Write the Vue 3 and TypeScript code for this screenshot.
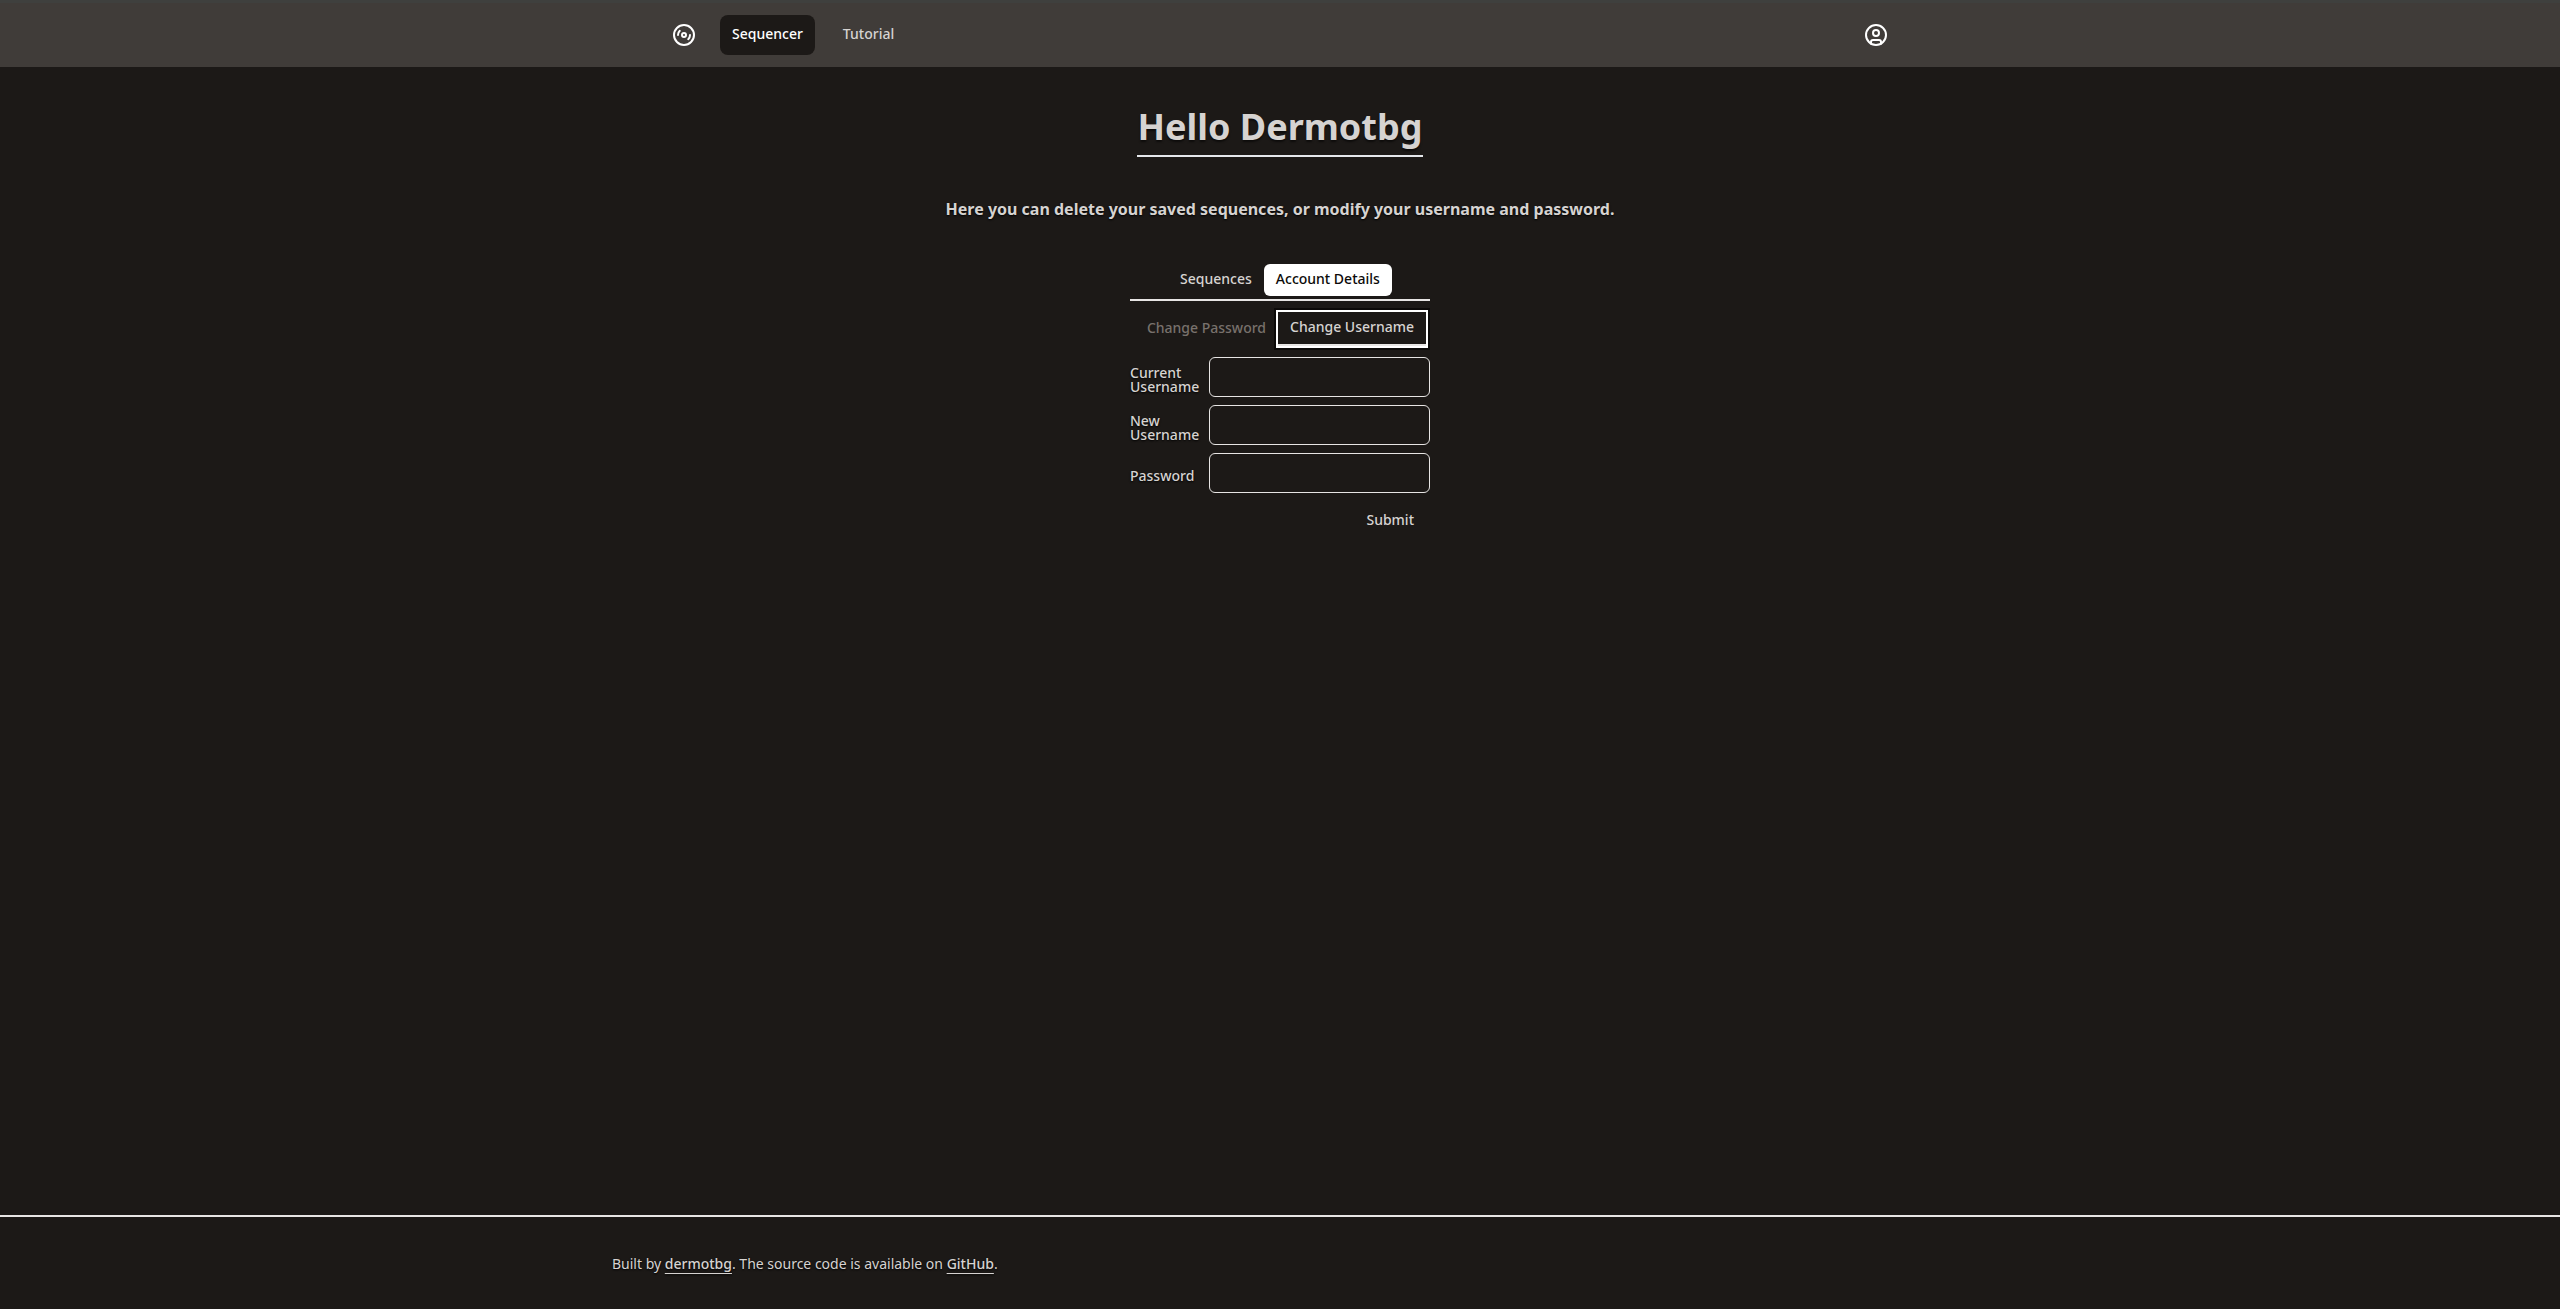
<script setup lang="ts">
import { ref } from 'vue'

interface Field {
  id: string
  label: string
  type: string
}

const fields: Field[] = [
  { id: 'current-username', label: 'Current Username', type: 'text' },
  { id: 'new-username', label: 'New Username', type: 'text' },
  { id: 'password', label: 'Password', type: 'password' },
]

const values = ref<Record<string, string>>({})
</script>

<template>
  <div class="page">
    <header class="nav">
      <nav class="nav-inner">
        <a class="icon-link" href="#" aria-label="Home">
          <svg viewBox="0 0 24 24" width="24" height="24" fill="none" stroke="currentColor" stroke-width="2" stroke-linecap="round">
            <circle cx="12" cy="12" r="10" />
            <circle cx="12" cy="12" r="2" />
            <path d="M6 12c0-1.7.7-3.2 1.8-4.2M18 12c0 1.7-.7 3.2-1.8 4.2" />
          </svg>
        </a>
        <a class="nav-link current" href="#">Sequencer</a>
        <a class="nav-link" href="#">Tutorial</a>
        <button class="icon-link account" type="button" aria-label="Account">
          <svg viewBox="0 0 24 24" width="24" height="24" fill="none" stroke="currentColor" stroke-width="2" stroke-linecap="round" stroke-linejoin="round">
            <circle cx="12" cy="12" r="10" />
            <circle cx="12" cy="10" r="3" />
            <path d="M7 20.662V19a2 2 0 0 1 2-2h6a2 2 0 0 1 2 2v1.662" />
          </svg>
        </button>
      </nav>
    </header>

    <main>
      <h1>Hello Dermotbg</h1>
      <p class="lead">Here you can delete your saved sequences, or modify your username and password.</p>

      <section class="panel">
        <div class="tabs" role="tablist">
          <button type="button" role="tab" class="tab" aria-selected="false">Sequences</button>
          <button type="button" role="tab" class="tab active" aria-selected="true">Account Details</button>
        </div>
        <div class="subtabs" role="tablist">
          <button type="button" role="tab" class="subtab" aria-selected="false">Change Password</button>
          <button type="button" role="tab" class="subtab active" aria-selected="true">Change Username</button>
        </div>
        <form @submit.prevent>
          <div v-for="f in fields" :key="f.id" class="field">
            <label :for="f.id">{{ f.label }}</label>
            <input :id="f.id" v-model="values[f.id]" :type="f.type" />
          </div>
          <button class="submit" type="submit">Submit</button>
        </form>
      </section>
    </main>

    <footer>
      <p>Built by <a href="#">dermotbg</a>. The source code is available on <a href="#">GitHub</a>.</p>
    </footer>
  </div>
</template>

<style>
body {
  background: #1c1917;
}
</style>

<style scoped>
.page {
  display: flex;
  flex-direction: column;
  min-height: 100vh;
  color: #d6d3d1;
  font: 14px/20px "Noto Sans", sans-serif;
}

*,
*::before {
  box-sizing: border-box;
}

h1,
p {
  margin: 0;
}

button,
input {
  margin: 0;
  font: inherit;
  color: inherit;
  background: none;
  border: 0;
}

.nav {
  background: #403c39;
  border-top: 3px solid #3f403e;
}

.nav-inner {
  display: flex;
  align-items: center;
  gap: 4px;
  width: 100%;
  max-width: 1216px;
  height: 64px;
  margin: 0 auto;
}

.icon-link {
  display: flex;
  padding: 0;
  margin-right: 20px;
  color: #fff;
}

.account {
  margin: 0 0 0 auto;
}

.nav-link {
  padding: 7px 12px 9px;
  margin-right: 12px;
  border-radius: 8px;
  line-height: 24px;
  font-weight: 500;
  color: #d6d3d1;
  text-decoration: none;
}

.nav-link.current {
  background: #1c1917;
  color: #fff;
}

main {
  flex: 1;
  display: flex;
  flex-direction: column;
  align-items: center;
}

h1 {
  margin-top: 40px;
  padding-bottom: 8px;
  border-bottom: 2px solid #e5e7eb;
  font-size: 36px;
  line-height: 40px;
  font-weight: 700;
  text-shadow: 0 2px 2px #0008;
}

.lead {
  margin-top: 40px;
  font-size: 16px;
  line-height: 24px;
  font-weight: 700;
  text-shadow: 0 1px 2px #000;
}

.panel {
  width: 300px;
  margin-top: 40px;
}

.tabs {
  display: flex;
  justify-content: center;
  padding: 3px 0;
  border-bottom: 2px solid #e7e5e4;
}

.tab,
.subtab {
  padding: 5px 12px 7px;
  font-weight: 500;
}

.tab {
  border-radius: 6px;
}

.tab.active {
  background: #fff;
  color: #0c0a09;
}

.subtabs {
  display: flex;
  justify-content: flex-end;
  align-items: center;
  padding: 11px 4px;
}

.subtab {
  color: #78716c;
}

.subtab.active {
  border-bottom: 2px solid #e7e5e4;
  box-shadow: 0 0 0 2px #fff, 0 0 0 4px #0c0a09;
  color: #d6d3d1;
}

form {
  display: flex;
  flex-direction: column;
  gap: 8px;
}

.field {
  display: flex;
  align-items: center;
  justify-content: space-between;
}

.field label {
  width: 76px;
  padding-top: 6px;
  line-height: 14px;
  font-weight: 500;
  text-shadow: 0 1px 2px #000;
}

.field input {
  width: 221px;
  height: 40px;
  padding: 8px 12px;
  border: 1px solid #e7e5e4;
  border-radius: 6px;
}

.submit {
  align-self: flex-end;
  padding: 9px 16px 7px;
  font-weight: 500;
}

footer {
  padding: 37px 20px 35px;
  border-top: 2px solid #e7e5e4;
}

footer p {
  max-width: 1336px;
  margin: 0 auto;
  text-shadow: 0 1px 2px #000;
}

footer a {
  color: inherit;
  font-weight: 500;
  text-underline-offset: 4px;
}
</style>
